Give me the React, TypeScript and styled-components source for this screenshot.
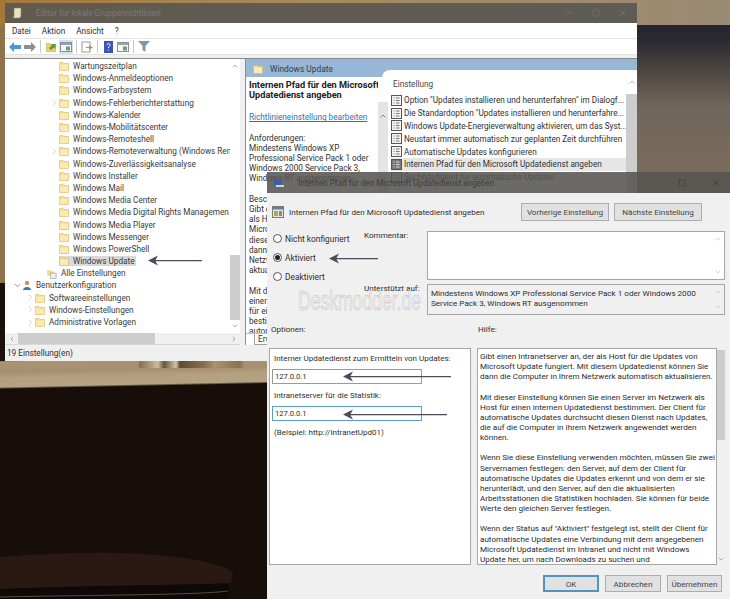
import React from 'react';
import styled, { createGlobalStyle } from 'styled-components';
import { ChevronRight, ChevronDown, ChevronUp, ChevronLeft, Minus, Square, X } from 'lucide-react';

const GlobalStyle = createGlobalStyle`
  html, body { margin: 0; padding: 0; background: #170e0a; }
  * { box-sizing: border-box; }
`;

const FONT = `Roboto, "Noto Sans", sans-serif`;

const Desktop = styled.div`
  position: relative;
  width: 730px;
  height: 599px;
  overflow: hidden;
  font-family: ${FONT};
  font-size: 8.2px;
  color: #2e2e2e;
  background:
    linear-gradient(90deg, #a5783a 0, #a88a5c 300px, #9b8b75 730px) 0 0 / 100% 25px no-repeat,
    linear-gradient(#8f7248, #8f7248) 0 25px / 5px 258px no-repeat,
    linear-gradient(#1a100a, #1a100a) 0 283px / 5px 78px no-repeat,
    linear-gradient(90deg, transparent 138px, #8a7050 140px, #cbbb9e 158px, #6a5438 164px, #d0c4ac 176px, #5e4a30 180px, #8a7050 205px, #a8946f 215px, #8a7050 240px, transparent 244px) 0 361px / 100% 7px no-repeat,
    linear-gradient(178.8deg, transparent 0 361px, #ab9473 362px, #a58f6e 372px, #b3a080 378px, #b5a283 387px, #170e0a 389px) 0 0 / 100% 100% no-repeat,
    linear-gradient(180deg, #26242e 25px, #2c2a33 42px, #4c4540 70px, #6f655a 105px, #7a6c5c 172px, #7a6c5c 361px);
`;

const Table = styled.svg`
  position: absolute;
  left: 0;
  bottom: 0;
`;

const Window = styled.div<{ $left: number; $top: number; $w: number; $h: number }>`
  position: absolute;
  left: ${(p) => p.$left}px;
  top: ${(p) => p.$top}px;
  width: ${(p) => p.$w}px;
  height: ${(p) => p.$h}px;
  display: flex;
  flex-direction: column;
  isolation: isolate;
`;

const TitleBar = styled.div<{ $h: number }>`
  flex: none;
  height: ${(p) => p.$h}px;
  display: flex;
  align-items: center;
  background: rgba(87, 85, 82, 0.88);
`;

const TitleIcon = styled.div`
  width: 12px;
  height: 12px;
  margin: 0 8px 0 6px;
  flex: none;
`;

const TitleText = styled.div<{ $color: string; $left: number }>`
  flex: 1;
  font-size: 8.15px;
  color: ${(p) => p.$color};
  padding-left: ${(p) => p.$left}px;
  white-space: nowrap;
`;

const Caption = styled.div<{ $gap: number; $color: string }>`
  display: flex;
  align-items: center;
  gap: ${(p) => p.$gap}px;
  padding-right: 9px;
  color: ${(p) => p.$color};
`;

const MenuBar = styled.div`
  flex: none;
  height: 16px;
  display: flex;
  align-items: center;
  gap: 11px;
  padding-left: 7px;
  background: #fff;
  border-bottom: 1px solid #e6e6e6;
`;

const ToolBar = styled.div`
  flex: none;
  height: 16px;
  display: flex;
  align-items: center;
  gap: 1px;
  padding-left: 3px;
  background: #fff;
  border-bottom: 1px solid #e3e3e3;
`;

const ToolSep = styled.div`
  width: 1px;
  height: 13px;
  background: #c8c8c8;
  margin: 0 2px;
`;

const ToolSlot = styled.div<{ $on?: boolean }>`
  width: 14px;
  height: 14px;
  display: flex;
  align-items: center;
  justify-content: center;
  background: ${(p) => (p.$on ? '#cfe4f6' : 'transparent')};
`;

const Spacer = styled.div`
  flex: none;
  height: 4px;
  background: #f0f0f0;
  border-bottom: 1px solid #8a8a8a;
`;

const Content = styled.div`
  flex: 1;
  min-height: 0;
  display: flex;
  background: #f0f0f0;
`;

const TreePane = styled.div`
  width: 235px;
  flex: none;
  display: flex;
  flex-direction: column;
  background: #fff;
  border-bottom: 1px solid #d8d8d8;
`;

const TreeBody = styled.div`
  flex: 1;
  min-height: 0;
  display: flex;
`;

const TreeRows = styled.div`
  flex: 1;
  min-width: 0;
  overflow: hidden;
  padding-top: 1px;
`;

const TreeRow = styled.div<{ $indent: number }>`
  height: 12.2px;
  display: flex;
  align-items: center;
  padding-left: ${(p) => p.$indent}px;
  white-space: nowrap;
  color: #3a3a3a;
`;

const Twisty = styled.span`
  width: 9px;
  flex: none;
  display: flex;
  color: #9a9a9a;
`;

const TreeLabel = styled.span<{ $on?: boolean }>`
  display: flex;
  align-items: center;
  gap: 4px;
  padding-right: 2px;
  background: ${(p) => (p.$on ? '#d9d9d9' : 'transparent')};
`;

const VScroll = styled.div<{ $w: number }>`
  width: ${(p) => p.$w}px;
  flex: none;
  display: flex;
  flex-direction: column;
  align-items: center;
  color: #6e6e6e;
  background: #fff;
`;

const ScrollArrow = styled.div<{ $h: number; $w?: number }>`
  height: ${(p) => p.$h}px;
  width: ${(p) => (p.$w ? `${p.$w}px` : 'auto')};
  flex: none;
  display: flex;
  align-items: center;
  justify-content: center;
`;

const ScrollGap = styled.div<{ $h?: number; $grow?: boolean; $color?: string }>`
  width: 100%;
  height: ${(p) => (p.$h ? `${p.$h}px` : 'auto')};
  flex: ${(p) => (p.$grow ? 1 : 'none')};
  background: ${(p) => p.$color ?? 'transparent'};
`;

const HScroll = styled.div`
  flex: none;
  height: 11px;
  display: flex;
  align-items: center;
  color: #6e6e6e;
  background: #f0f0f0;
`;

const HThumb = styled.div`
  width: 137px;
  height: 100%;
  background: #cdcdcd;
`;

const Divider = styled.div`
  width: 5px;
  flex: none;
  background: #f0f0f0;
`;

const RightPane = styled.div`
  flex: 1;
  min-width: 0;
  display: flex;
  flex-direction: column;
  background: #fff;
  border-left: 1px solid #8f8f8f;
`;

const BlueHead = styled.div`
  flex: none;
  height: 18px;
  display: flex;
  align-items: center;
  gap: 7px;
  padding-left: 7px;
  padding-top: 2px;
  background: #96b7d6;
  font-size: 8.4px;
  color: #33404c;
`;

const RightBody = styled.div`
  flex: 1;
  min-height: 0;
  display: flex;
`;

const DescColumn = styled.div`
  width: 132px;
  flex: none;
  display: flex;
  flex-direction: column;
  background: #fff;
`;

const DescText = styled.div`
  flex: 1;
  min-height: 0;
  overflow: hidden;
  padding: 3px 0 0 3px;
  line-height: 10.2px;
  white-space: nowrap;
`;

const DescTitle = styled.div`
  font-weight: 700;
  font-size: 9.2px;
  color: #222;
  margin-bottom: 12px;
`;

const DescLink = styled.div`
  color: #2a72b8;
  text-decoration: underline;
  margin-bottom: 10px;
`;

const DescGap = styled.div`
  height: 10.2px;
`;

const TabRow = styled.div`
  flex: none;
  height: 12px;
  display: flex;
  padding-left: 8px;
  gap: 4px;
  border-top: 1px solid #c0c0c0;
`;

const Tab = styled.div`
  padding: 0 3px;
  line-height: 11px;
  border: 1px solid #a0a0a0;
  border-top: 0;
`;

const DescScroll = styled.div`
  width: 10px;
  flex: none;
  margin-top: 25px;
  background: #e4e4e4;
  color: #555;
  display: flex;
  justify-content: center;
  position: relative;
  z-index: 1;
  padding-top: 10px;
`;

const ListPanel = styled.div`
  flex: 1;
  min-width: 0;
  margin: -7px 0 0 -6px;
  border-top-left-radius: 8px;
  background: #fff;
  display: flex;
  padding-left: 9px;
`;

const ListBody = styled.div`
  flex: 1;
  min-width: 0;
  overflow: hidden;
  padding-top: 9px;
`;

const ListHead = styled.div`
  height: 15px;
  padding-left: 2px;
  color: #444;
`;

const ListRow = styled.div<{ $on?: boolean }>`
  height: 12.8px;
  display: flex;
  align-items: center;
  gap: 2px;
  white-space: nowrap;
  overflow: hidden;
  color: #303030;
  background: ${(p) => (p.$on ? '#e6e6e6' : 'transparent')};
`;

const StatusBar = styled.div`
  flex: none;
  height: 16px;
  display: flex;
  align-items: center;
  padding-left: 2px;
  background: #f0f0f0;
`;

const DialogBody = styled.div`
  flex: 1;
  min-height: 0;
  display: flex;
  flex-direction: column;
  background: #f0f0f0;
  padding: 10px 5px 7px 2px;
  font-size: 8.1px;
`;

const HeadRow = styled.div`
  flex: none;
  height: 18px;
  display: flex;
  align-items: center;
  padding-left: 3px;
`;

const HeadText = styled.div`
  flex: 1;
  padding-left: 5px;
`;

const HeadButtons = styled.div`
  display: flex;
  gap: 5px;
  padding-right: 23px;
`;

const Button = styled.div<{ $w: number; $focus?: boolean; $h?: number }>`
  width: ${(p) => p.$w}px;
  height: ${(p) => p.$h ?? 18}px;
  display: flex;
  align-items: center;
  justify-content: center;
  background: #e1e1e1;
  border: 1px solid ${(p) => (p.$focus ? '#4f93c8' : '#adadad')};
  box-shadow: ${(p) => (p.$focus ? 'inset 0 0 0 1px #4f93c8' : 'none')};
  white-space: nowrap;
  color: #444;
`;

const StateRow = styled.div`
  flex: none;
  margin-top: 10px;
  display: grid;
  grid-template-columns: 95px 63px 298px;
  grid-template-rows: 49px 31px;
  row-gap: 4px;
  height: 84px;
`;

const Radios = styled.div`
  grid-row: 1 / span 2;
  display: flex;
  flex-direction: column;
  gap: 10px;
  padding: 3px 0 0 4px;
  font-size: 8.4px;
`;

const RadioRow = styled.div`
  display: flex;
  align-items: center;
  gap: 3px;
  height: 9px;
  white-space: nowrap;
`;

const RadioCircle = styled.span<{ $on?: boolean }>`
  width: 9px;
  height: 9px;
  flex: none;
  border-radius: 50%;
  border: 1px solid #555;
  background: #fff;
  position: relative;
  &::after {
    content: '';
    position: absolute;
    inset: 1px;
    border-radius: 50%;
    background: ${(p) => (p.$on ? '#222' : 'transparent')};
  }
`;

const FieldLabel = styled.div`
  white-space: nowrap;
  line-height: 9px;
`;

const TextBox = styled.div<{ $bg: string }>`
  display: flex;
  border: 1px solid #a6a6a6;
  background: ${(p) => p.$bg};
  line-height: 10.2px;
  min-width: 0;
`;

const BoxText = styled.div`
  flex: 1;
  padding: 3px 1px 3px 3px;
  min-width: 0;
  white-space: nowrap;
`;

const BoxScroll = styled.div`
  width: 12px;
  flex: none;
  display: flex;
  flex-direction: column;
  justify-content: space-between;
  align-items: center;
  padding: 3px 0;
  color: #b0b0b0;
`;

const SectionRow = styled.div`
  flex: none;
  height: 33px;
  display: flex;
  align-items: flex-start;
  padding: 9px 0 0 2px;
`;

const SectionLabel = styled.div<{ $w: number }>`
  width: ${(p) => p.$w}px;
`;

const Panels = styled.div`
  flex: 1;
  min-height: 0;
  display: flex;
  gap: 6px;
`;

const OptionsPanel = styled.div`
  width: 202px;
  flex: none;
  background: #fff;
  border: 1px solid #a6a6a6;
  padding: 5px 3px 0 2px;
  display: flex;
  flex-direction: column;
`;

const OptionLabel = styled.div`
  line-height: 10px;
  padding-left: 2px;
  white-space: nowrap;
  font-size: 8px;
`;

const Input = styled.div<{ $focus?: boolean }>`
  width: 150px;
  height: 15px;
  margin: 5px 0 7px;
  padding-left: 2px;
  display: flex;
  align-items: center;
  font-size: 7.6px;
  border: 1px solid ${(p) => (p.$focus ? '#5b9bd0' : '#9a9a9a')};
`;

const HelpWrap = styled.div`
  flex: 1;
  min-width: 0;
  display: flex;
`;

const HelpPanel = styled.div`
  width: 240px;
  flex: none;
  background: #fff;
  border: 1px solid #a6a6a6;
  padding: 2px 0 0 2px;
  overflow: hidden;
  white-space: nowrap;
  color: #2a2a2a;
`;

const HelpLine = styled.div`
  height: 10.15px;
  line-height: 10.15px;
`;

const HelpScroll = styled.div`
  flex: 1;
  display: flex;
  flex-direction: column;
  align-items: center;
  color: #777;
`;

const FooterRow = styled.div`
  flex: none;
  height: 27px;
  display: flex;
  justify-content: flex-end;
  align-items: flex-end;
  gap: 6px;
  padding: 0 3px 0 0;
`;

const Arrow = styled.svg<{ $left: number; $top: number }>`
  position: absolute;
  left: ${(p) => p.$left}px;
  top: ${(p) => p.$top}px;
`;

const Watermark = styled.div`
  position: absolute;
  left: 298px;
  top: 285px;
  font-family: "Liberation Sans", sans-serif;
  font-size: 27px;
  line-height: 32px;
  color: rgba(245, 245, 245, 0.6);
  -webkit-text-stroke: 0.6px #bdbdbd;
  white-space: nowrap;
  transform: scaleX(0.65);
  transform-origin: left center;
`;

const Folder = () => (
  <svg width="10" height="10" viewBox="0 0 10 10" style={{ flex: 'none' }}>
    <path d="M0.5 1.500h3.500l1 1h4.500v7h-9z" fill="#f5da88" stroke="#d9bc6a" strokeWidth="0.6" />
    <rect x="1" y="3.500" width="8" height="5.500" fill="#fbeab4" />
  </svg>
);

const SettingIcon = ({ on }: { on?: boolean }) => (
  <svg width="11" height="11" viewBox="0 0 11 11" style={{ flex: 'none' }}>
    <rect x="0.5" y="0.5" width="10" height="10" fill={on ? '#777' : '#f4f4f4'} stroke="#555" />
    <path d="M2.500 3h1M5 3h3.500M2.500 5.500h1M5 5.500h3.500M2.500 8h1M5 8h3.500" stroke={on ? '#ddd' : '#777'} strokeWidth="1" />
  </svg>
);

const ToolArrow = ({ color, flip }: { color: string; flip?: boolean }) => (
  <svg width="12" height="10" viewBox="0 0 12 10" style={flip ? { transform: 'scaleX(-1)' } : undefined}>
    <path d="M0 5l5-5v3h7v4H5v3z" fill={color} />
  </svg>
);

const PaneIcon = () => (
  <svg width="12" height="10" viewBox="0 0 12 10">
    <rect x="0.5" y="0.5" width="11" height="9" fill="#f4f6f8" stroke="#8a8f95" />
    <rect x="1" y="1" width="10" height="2" fill="#9aa3ac" />
    <rect x="6" y="4.500" width="4" height="4" fill="#6f9e6f" />
  </svg>
);

const UpIcon = () => (
  <svg width="11" height="11" viewBox="0 0 11 11">
    <path d="M0.5 2.500h3.500l1 1h4.500v7h-9z" fill="#f0cf70" stroke="#c9a84f" strokeWidth="0.6" />
    <path d="M3 7l3-3-1.500-1h5v5L8 6.500 5 9z" fill="#5c9e3a" />
  </svg>
);

const PolicyIcon = () => (
  <svg width="12" height="12" viewBox="0 0 12 12" style={{ flex: 'none' }}>
    <rect x="0.5" y="0.5" width="11" height="11" fill="#e8e8e0" stroke="#7a7a70" />
    <rect x="1" y="1" width="10" height="2.500" fill="#5f7f96" />
    <rect x="2" y="5" width="4" height="5" fill="#b9a05a" />
    <rect x="7" y="5" width="3" height="5" fill="#7f8f7a" />
  </svg>
);

const ArrowMark = ({ left, top, len }: { left: number; top: number; len: number }) => (
  <Arrow $left={left} $top={top} width={len} height="11" viewBox={`0 0 ${len} 11`}>
    <path d={`M0 5.500l10-5-2.500 4.600H${len}v1.200H7.500L10 10.500z`} fill="#4b4b5c" />
  </Arrow>
);

const treeRows = [
  { label: 'Wartungszeitplan' },
  { label: 'Windows-Anmeldeoptionen' },
  { label: 'Windows-Farbsystem' },
  { label: 'Windows-Fehlerberichterstattung', twisty: true },
  { label: 'Windows-Kalender' },
  { label: 'Windows-Mobilitätscenter' },
  { label: 'Windows-Remoteshell' },
  { label: 'Windows-Remoteverwaltung (Windows Rem', twisty: true },
  { label: 'Windows-Zuverlässigkeitsanalyse' },
  { label: 'Windows Installer' },
  { label: 'Windows Mail' },
  { label: 'Windows Media Center' },
  { label: 'Windows Media Digital Rights Managemen' },
  { label: 'Windows Media Player' },
  { label: 'Windows Messenger' },
  { label: 'Windows PowerShell' },
  { label: 'Windows Update', selected: true },
];

const settings = [
  'Option "Updates installieren und herunterfahren" im Dialogf...',
  'Die Standardoption "Updates installieren und herunterfahre...',
  'Windows Update-Energieverwaltung aktivieren, um das Syst...',
  'Neustart immer automatisch zur geplanten Zeit durchführen',
  'Automatische Updates konfigurieren',
  'Internen Pfad für den Microsoft Updatedienst angeben',
  'Suchhäufigkeit für automatische Updates',
];

const descLines = [
  'Beschr', 'Gibt e', 'als H', 'Micro', 'diese', 'dann', 'Netzw', 'aktua', '',
  'Mit d', 'einer', 'für ei', 'bestin', 'autom',
];

const helpLines = [
  'Gibt einen Intranetserver an, der als Host für die Updates von',
  'Microsoft Update fungiert. Mit diesem Updatedienst können Sie',
  'dann die Computer in Ihrem Netzwerk automatisch aktualisieren.',
  '',
  'Mit dieser Einstellung können Sie einen Server im Netzwerk als',
  'Host für einen internen Updatedienst bestimmen. Der Client für',
  'automatische Updates durchsucht diesen Dienst nach Updates,',
  'die auf die Computer in Ihrem Netzwerk angewendet werden',
  'können.',
  '',
  'Wenn Sie diese Einstellung verwenden möchten, müssen Sie zwei',
  'Servernamen festlegen: den Server, auf dem der Client für',
  'automatische Updates die Updates erkennt und von dem er sie',
  'herunterlädt, und den Server, auf den die aktualisierten',
  'Arbeitsstationen die Statistiken hochladen. Sie können für beide',
  'Werte den gleichen Server festlegen.',
  '',
  'Wenn der Status auf "Aktiviert" festgelegt ist, stellt der Client für',
  'automatische Updates eine Verbindung mit dem angegebenen',
  'Microsoft Updatedienst im Intranet und nicht mit Windows',
  'Update her, um nach Downloads zu suchen und',
];

const App = () => (
  <Desktop>
    <GlobalStyle />
    <Table width="300" height="60" viewBox="0 0 300 60">
      <path d="M0 18C90 10 200 12 233 33l-5 27H0z" fill="#2a1812" />
      <path d="M0 50C90 46 200 46 230 44l-2 16H0z" fill="#0e0806" />
      <path d="M0 58C90 56 200 56 228 52" stroke="#5a4a40" fill="none" />
    </Table>

    <Window $left={5} $top={3} $w={632} $h={358}>
      <TitleBar $h={20}>
        <TitleIcon>
          <svg width="12" height="12" viewBox="0 0 12 12"><path d="M3 1h7v8l-1 2H2l1-2z" fill="#e8dfc4" stroke="#8a8068" strokeWidth="0.6" /></svg>
        </TitleIcon>
        <TitleText $color="#7d7a72" $left={5}>Editor für lokale Gruppenrichtlinien</TitleText>
        <Caption $gap={18} $color="#8d8a82">
          <Minus size={10} strokeWidth={1} />
          <Square size={8} strokeWidth={1} />
          <X size={10} strokeWidth={1} />
        </Caption>
      </TitleBar>
      <MenuBar>
        <span>Datei</span>
        <span>Aktion</span>
        <span>Ansicht</span>
        <span>?</span>
      </MenuBar>
      <ToolBar>
        <ToolSlot><ToolArrow color="#3f9ad6" /></ToolSlot>
        <ToolSlot><ToolArrow color="#8f8f8f" flip /></ToolSlot>
        <ToolSep />
        <ToolSlot><UpIcon /></ToolSlot>
        <ToolSlot $on><PaneIcon /></ToolSlot>
        <ToolSep />
        <ToolSlot>
          <svg width="12" height="12" viewBox="0 0 12 12"><rect x="1" y="1" width="8" height="10" fill="#fff" stroke="#9a9a9a" /><path d="M5 6h3V4l4 2.500L8 9V7H5z" fill="#7db24a" /></svg>
        </ToolSlot>
        <ToolSep />
        <ToolSlot>
          <svg width="9" height="12" viewBox="0 0 9 12"><rect width="9" height="12" fill="#3b55b5" /><path d="M3 4c0-2 3-2 3 0 0 1.200-1.500 1.200-1.500 3M4.500 8.500v1" stroke="#fff" fill="none" /></svg>
        </ToolSlot>
        <ToolSlot><PaneIcon /></ToolSlot>
        <ToolSep />
        <ToolSlot>
          <svg width="12" height="11" viewBox="0 0 12 11"><path d="M0 0h12L7.500 5v6l-3-2V5z" fill="#7d97ad" /></svg>
        </ToolSlot>
      </ToolBar>
      <Spacer />
      <Content>
        <TreePane>
          <TreeBody>
            <TreeRows>
              {treeRows.map((row) => (
                <TreeRow key={row.label} $indent={45}>
                  <Twisty>{row.twisty && <ChevronRight size={9} strokeWidth={1.2} />}</Twisty>
                  <TreeLabel $on={row.selected}>
                    <Folder />
                    {row.label}
                  </TreeLabel>
                </TreeRow>
              ))}
              <TreeRow $indent={42}>
                <TreeLabel>
                  <svg width="10" height="11" viewBox="0 0 11 11"><path d="M0 2h4l1 1h3v5H0z" fill="#f5da88" /><rect x="4" y="5" width="6" height="6" fill="#eef0f4" stroke="#8a8f95" strokeWidth="0.6" /></svg>
                  Alle Einstellungen
                </TreeLabel>
              </TreeRow>
              <TreeRow $indent={8}>
                <Twisty><ChevronDown size={9} strokeWidth={1.5} color="#444" /></Twisty>
                <TreeLabel>
                  <svg width="10" height="11" viewBox="0 0 10 11"><circle cx="5" cy="3" r="2.200" fill="#c9905a" /><path d="M1 10c0-4 8-4 8 0z" fill="#3d78b5" /></svg>
                  Benutzerkonfiguration
                </TreeLabel>
              </TreeRow>
              {['Softwareeinstellungen', 'Windows-Einstellungen', 'Administrative Vorlagen'].map((label) => (
                <TreeRow key={label} $indent={21}>
                  <Twisty><ChevronRight size={9} strokeWidth={1.2} /></Twisty>
                  <TreeLabel><Folder />{label}</TreeLabel>
                </TreeRow>
              ))}
            </TreeRows>
            <VScroll $w={10}>
              <ScrollArrow $h={14}><ChevronUp size={8} strokeWidth={1.6} /></ScrollArrow>
              <ScrollGap $h={182} />
              <ScrollGap $h={65} $color="#cdcdcd" />
              <ScrollArrow $h={12}><ChevronDown size={8} strokeWidth={1.6} /></ScrollArrow>
            </VScroll>
          </TreeBody>
          <HScroll>
            <ScrollArrow $h={11} $w={13}><ChevronLeft size={8} strokeWidth={1.6} /></ScrollArrow>
            <HThumb />
            <ScrollGap $grow />
            <ScrollArrow $h={11} $w={13}><ChevronRight size={8} strokeWidth={1.6} /></ScrollArrow>
          </HScroll>
        </TreePane>
        <Divider />
        <RightPane>
          <BlueHead><Folder />Windows Update</BlueHead>
          <RightBody>
            <DescColumn>
              <DescText>
                <DescTitle>Internen Pfad für den Microsoft<br />Updatedienst angeben</DescTitle>
                <DescLink>Richtlinieneinstellung bearbeiten</DescLink>
                <div>Anforderungen:</div>
                <div>Mindestens Windows XP</div>
                <div>Professional Service Pack 1 oder</div>
                <div>Windows 2000 Service Pack 3,</div>
                <div>Windows RT ausgenommen</div>
                <DescGap />
                {descLines.map((line, i) => (line ? <div key={i}>{line}</div> : <DescGap key={i} />))}
              </DescText>
              <TabRow>
                <Tab>Erweitert</Tab>
                <Tab>Standard</Tab>
              </TabRow>
            </DescColumn>
            <DescScroll><ChevronUp size={8} strokeWidth={2} /></DescScroll>
            <ListPanel>
              <ListBody>
                <ListHead>Einstellung</ListHead>
                {settings.map((text, i) => (
                  <ListRow key={text} $on={i === 5}>
                    <SettingIcon on={i === 5} />
                    {text}
                  </ListRow>
                ))}
              </ListBody>
              <VScroll $w={11}>
                <ScrollArrow $h={24}><ChevronUp size={8} strokeWidth={1.6} /></ScrollArrow>
                <ScrollGap $grow $color="#cdcdcd" />
              </VScroll>
            </ListPanel>
          </RightBody>
        </RightPane>
      </Content>
      <StatusBar>19 Einstellung(en)</StatusBar>
    </Window>

    <ArrowMark left={148} top={255} len={54} />

    <Window $left={267} $top={172} $w={463} $h={427}>
      <TitleBar $h={21}>
        <TitleIcon>
          <svg width="12" height="12" viewBox="0 0 12 12"><rect x="1" y="2" width="8" height="6" fill="#3b5fa8" /><rect x="3" y="8" width="8" height="2" fill="#cfd4da" /></svg>
        </TitleIcon>
        <TitleText $color="#3f3e3b" $left={5}>Internen Pfad für den Microsoft Updatedienst angeben</TitleText>
        <Caption $gap={24} $color="#2f2e2c">
          <Minus size={10} strokeWidth={1} color="#55534f" />
          <Square size={8} strokeWidth={1.2} />
          <X size={11} strokeWidth={1.2} />
        </Caption>
      </TitleBar>
      <DialogBody>
        <HeadRow>
          <PolicyIcon />
          <HeadText>Internen Pfad für den Microsoft Updatedienst angeben</HeadText>
          <HeadButtons>
            <Button $w={88}>Vorherige Einstellung</Button>
            <Button $w={88}>Nächste Einstellung</Button>
          </HeadButtons>
        </HeadRow>
        <StateRow>
          <Radios>
            <RadioRow><RadioCircle />Nicht konfiguriert</RadioRow>
            <RadioRow><RadioCircle $on />Aktiviert</RadioRow>
            <RadioRow><RadioCircle />Deaktiviert</RadioRow>
          </Radios>
          <FieldLabel>Kommentar:</FieldLabel>
          <TextBox $bg="#fff">
            <BoxText />
            <BoxScroll>
              <ChevronUp size={8} strokeWidth={1.6} />
              <ChevronDown size={8} strokeWidth={1.6} />
            </BoxScroll>
          </TextBox>
          <FieldLabel>Unterstützt auf:</FieldLabel>
          <TextBox $bg="#f0f0f0">
            <BoxText>
              Mindestens Windows XP Professional Service Pack 1 oder Windows 2000<br />
              Service Pack 3, Windows RT ausgenommen
            </BoxText>
            <BoxScroll>
              <ChevronUp size={8} strokeWidth={1.6} />
              <ChevronDown size={8} strokeWidth={1.6} />
            </BoxScroll>
          </TextBox>
        </StateRow>
        <SectionRow>
          <SectionLabel $w={207}>Optionen:</SectionLabel>
          <SectionLabel $w={60}>Hilfe:</SectionLabel>
        </SectionRow>
        <Panels>
          <OptionsPanel>
            <OptionLabel>Interner Updatedienst zum Ermitteln von Updates:</OptionLabel>
            <Input>127.0.0.1</Input>
            <OptionLabel>Intranetserver für die Statistik:</OptionLabel>
            <Input $focus>127.0.0.1</Input>
            <OptionLabel>(Beispiel: http://IntranetUpd01)</OptionLabel>
          </OptionsPanel>
          <HelpWrap>
            <HelpPanel>
              {helpLines.map((line, i) => <HelpLine key={i}>{line}</HelpLine>)}
            </HelpPanel>
            <HelpScroll>
              <ScrollArrow $h={2} />
              <ScrollGap $h={90} $color="#cdcdcd" />
              <ScrollGap $grow />
              <ScrollArrow $h={12}><ChevronDown size={8} strokeWidth={1.6} /></ScrollArrow>
            </HelpScroll>
          </HelpWrap>
        </Panels>
        <FooterRow>
          <Button $w={56} $h={17} $focus>OK</Button>
          <Button $w={56} $h={17}>Abbrechen</Button>
          <Button $w={55} $h={17}>Übernehmen</Button>
        </FooterRow>
      </DialogBody>
    </Window>

    <ArrowMark left={329} top={253} len={49} />
    <ArrowMark left={343} top={371} len={108} />
    <ArrowMark left={343} top={409} len={104} />
    <Watermark>Deskmodder.de</Watermark>
  </Desktop>
);

export default App;
